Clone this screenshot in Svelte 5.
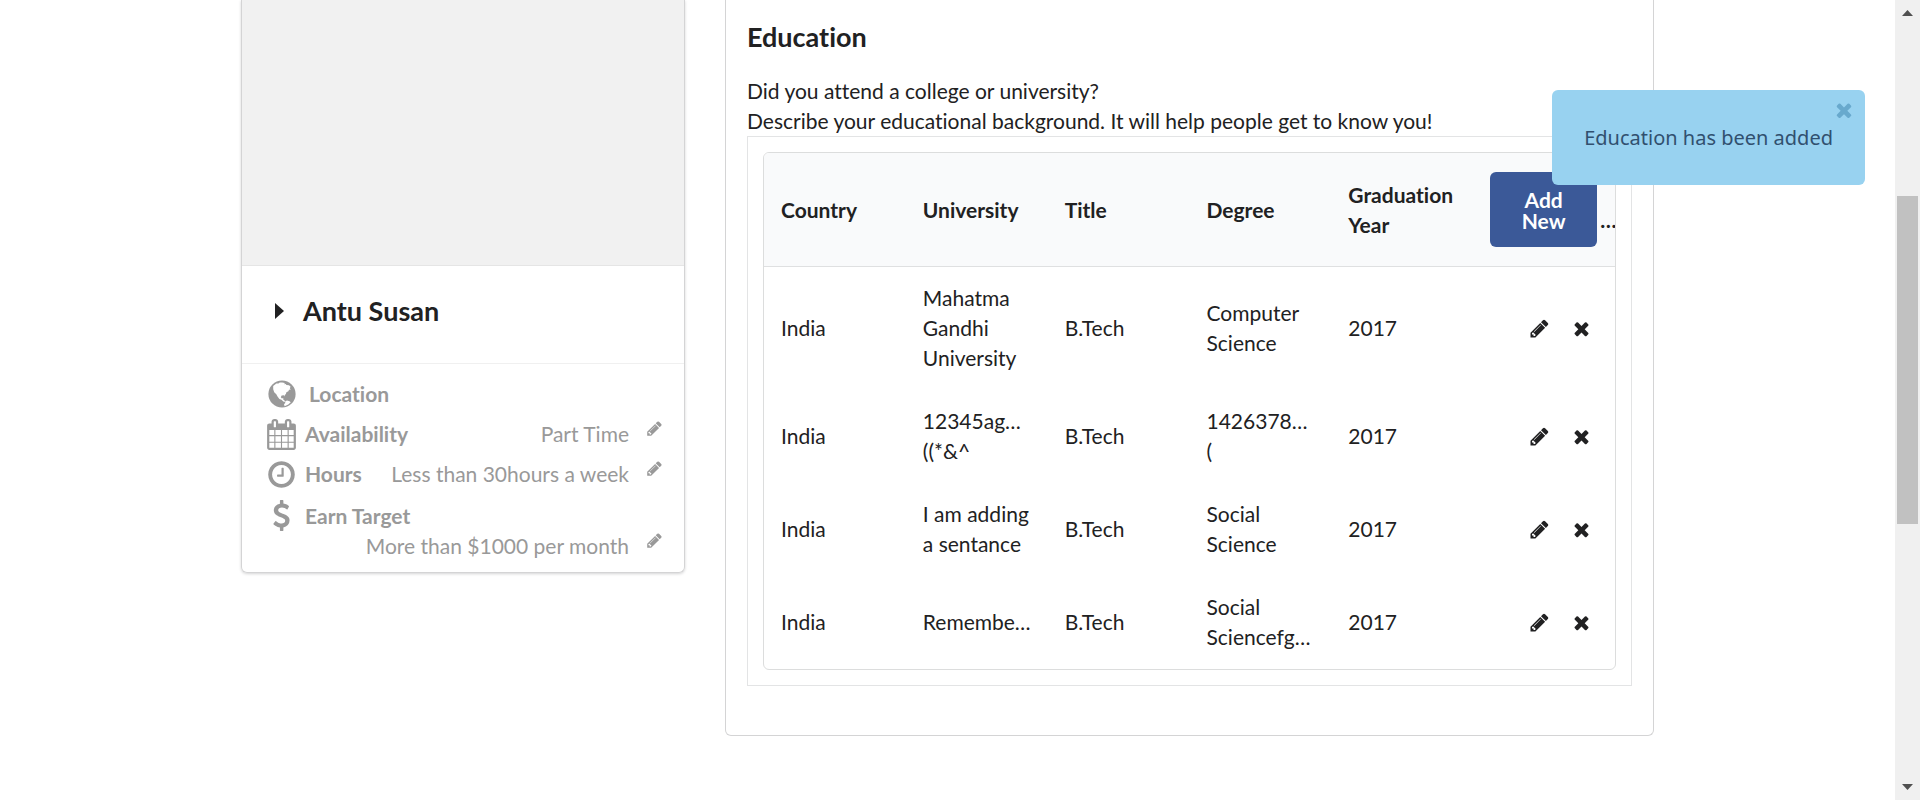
<script>
  const icons = {
    pencil: 'M491 1536l91-91-235-235-91 91v107h128v128h107zm523-928q0-22-22-22-10 0-17 7l-542 542q-7 7-7 17 0 22 22 22 10 0 17-7l542-542q7-7 7-17zm-54-192l416 416-832 832h-416v-416zm683 96q0 53-37 90l-166 166-416-416 166-165q36-38 90-38 53 0 91 38l235 234q37 39 37 91z',
    times: 'M1490 1322q0 40-28 68l-136 136q-28 28-68 28t-68-28l-294-294-294 294q-28 28-68 28t-68-28l-136-136q-28-28-28-68t28-68l294-294-294-294q-28-28-28-68t28-68l136-136q28-28 68-28t68 28l294 294 294-294q28-28 68-28t68 28l136 136q28 28 28 68t-28 68l-294 294 294 294q28 28 28 68z',
    clock: 'M1024 544v448q0 14-9 23t-23 9h-320q-14 0-23-9t-9-23v-64q0-14 9-23t23-9h224v-352q0-14 9-23t23-9h64q14 0 23 9t9 23zm416 352q0-148-73-273t-198-198-273-73-273 73-198 198-73 273 73 273 198 198 273 73 273-73 198-198 73-273zm224 0q0 209-103 385.5t-279.5 279.5-385.5 103-385.5-103-279.5-279.5-103-385.5 103-385.5 279.5-279.5 385.5-103 385.5 103 279.5 279.5 103 385.5z',
    calendar: 'M192 1664h288v-288h-288v288zm352 0h320v-288h-320v288zm-352-352h288v-320h-288v320zm352 0h320v-320h-320v320zm-352-384h288v-288h-288v288zm736 736h320v-288h-320v288zm-384-736h320v-288h-320v288zm768 736h288v-288h-288v288zm-384-352h320v-320h-320v320zm-352-864v-288q0-13-9.5-22.5t-22.5-9.5h-64q-13 0-22.5 9.5t-9.5 22.5v288q0 13 9.5 22.5t22.5 9.5h64q13 0 22.5-9.5t9.5-22.5zm736 864h288v-320h-288v320zm-384-384h320v-288h-320v288zm384 0h288v-288h-288v288zm32-480v-288q0-13-9.5-22.5t-22.5-9.5h-64q-13 0-22.5 9.5t-9.5 22.5v288q0 13 9.5 22.5t22.5 9.5h64q13 0 22.5-9.5t9.5-22.5zm384-64v1280q0 52-38 90t-90 38h-1408q-52 0-90-38t-38-90v-1280q0-52 38-90t90-38h128v-96q0-66 47-113t113-47h64q66 0 113 47t47 113v96h384v-96q0-66 47-113t113-47h64q66 0 113 47t47 113v96h128q52 0 90 38t38 90z',
    dollar: 'M1362 1185q0 153-99.5 263.5t-258.5 136.5v175q0 14-9 23t-23 9h-135q-13 0-22.5-9.5t-9.5-22.5v-175q-66-9-127.5-31t-101.5-44.5-74-48-46.5-37.5-17.5-18q-17-21-2-41l103-135q7-10 23-12 15-2 24 9l2 2q113 99 243 125 37 8 74 8 81 0 142.5-43t61.5-122q0-28-15-53t-33.5-42-58.5-37.5-66-32-80-32.5q-39-16-61.5-25t-61.5-26.5-62.5-31-56.5-35.5-53.5-42.5-43.5-49-35.5-58-21-66.5-8.5-78q0-138 98-242t255-134v-180q0-13 9.5-22.5t22.5-9.5h135q14 0 23 9t9 23v176q57 6 110.5 23t87 33.5 63.5 37.5 39 29 15 14q17 18 5 38l-81 146q-8 15-23 16-14 3-27-7-3-3-14.5-12t-39-26.5-58.5-32-74.5-26-85.5-11.5q-95 0-155 43t-60 111q0 26 8.5 48t29.5 41.5 39.5 33 56 31 60.5 27 70 27.5q53 20 81 31.5t76 35 75.5 42.5 62 50 53 63.5 31.5 76.5 13 94z'
  };

  const details = [
    { icon: 'calendar', label: 'Availability', value: 'Part Time' },
    { icon: 'clock', label: 'Hours', value: 'Less than 30hours a week' },
    { icon: 'dollar', label: 'Earn Target', value: 'More than $1000 per month', below: true }
  ];

  const columns = ['Country', 'University', 'Title', 'Degree', 'Graduation Year'];

  const rows = [
    ['India', ['Mahatma Gandhi University'], 'B.Tech', ['Computer Science'], '2017'],
    ['India', ['12345ag…', '((*&^'], 'B.Tech', ['1426378…', '('], '2017'],
    ['India', ['I am adding a sentance'], 'B.Tech', ['Social Science'], '2017'],
    ['India', ['Remembe…'], 'B.Tech', ['Social', 'Sciencefg…'], '2017']
  ];

  let toastOpen = $state(true);
</script>

{#snippet icon(name, size)}
  <svg width={size} height={size} viewBox="0 0 1792 1792" fill="currentColor" aria-hidden="true"><path d={icons[name]} /></svg>
{/snippet}

<div class="page">
  <main>
    <div class="columns">
      <aside class="card profile">
        <div class="photo"></div>
        <div class="name">
          <svg width="9" height="16" viewBox="0 0 9 16" aria-hidden="true"><path d="M0 0L9 8L0 16z" fill="currentColor" /></svg>
          <h2>Antu Susan</h2>
        </div>
        <div class="details">
          <div class="detail">
            <span class="glyph">
              <svg width="28" height="28" viewBox="0 0 28 28" aria-hidden="true">
                <circle cx="14" cy="14" r="13.6" fill="currentColor" />
                <path fill="#fff" d="M5.2 6L8.3 3.6L10.4 3.4L11.8 2.6L14.2 2.500L16.8 3.1L16.3 4.300L17.8 4L18.4 5L21 5.3L22.6 6.8L21.8 8.2L22.8 9.4L21 9.8L20.4 11.3L18.4 12.3L17.9 14.1L16.8 15L16.9 16.5L16 15.3L13.6 15.4L12.8 17.2L13.9 18.4L15.3 17.9L15.2 19.6L16.6 20.5L17 21.9L15.3 21.4L13.5 19.8L11.4 18.9L9.5 16.5L8.3 14.2L6.2 12.2L5.200 9.3z" />
                <path fill="#fff" d="M17.3 21.2L19 20.6L21.6 21.3L22.8 22.3L20.3 24.6L16.6 26.2L16 24.3L17.2 23z" />
              </svg>
            </span>
            <span class="label location">Location</span>
          </div>
          {#each details as d}
            <div class="detail" class:wrap={d.below}>
              <span class="glyph">{@render icon(d.icon, 31)}</span>
              <span class="label">{d.label}</span>
              <span class="value">{d.value}</span>
              <button class="bare edit" aria-label="Edit {d.label}">{@render icon('pencil', 17)}</button>
            </div>
          {/each}
        </div>
      </aside>

      <section class="card education">
        <h2>Education</h2>
        <p>Did you attend a college or university?<br />Describe your educational background. It will help people get to know you!</p>
        <div class="segment">
          <div class="frame">
            <table>
              <thead>
                <tr>
                  {#each columns as c}<th scope="col">{c}</th>{/each}
                  <th scope="col"><div class="adder"><button class="add">Add New</button><span class="more">…</span></div></th>
                </tr>
              </thead>
              <tbody>
                {#each rows as row}
                  <tr>
                    {#each row as cell}
                      <td>{#if Array.isArray(cell)}{#each cell as line}<div>{line}</div>{/each}{:else}{cell}{/if}</td>
                    {/each}
                    <td>
                      <div class="actions">
                        <button class="bare" aria-label="Edit">{@render icon('pencil', 21)}</button>
                        <button class="bare" aria-label="Delete">{@render icon('times', 21)}</button>
                      </div>
                    </td>
                  </tr>
                {/each}
              </tbody>
            </table>
          </div>
        </div>
      </section>
    </div>
  </main>

  <div class="scrollbar" aria-hidden="true">
    <svg width="11" height="6" viewBox="0 0 11 6"><path d="M0 6L5.500 0L11 6z" fill="#505050" /></svg>
    <div class="track"><div class="thumb"></div></div>
    <svg width="11" height="6" viewBox="0 0 11 6"><path d="M0 0L5.500 6L11 0z" fill="#505050" /></svg>
  </div>

  {#if toastOpen}
    <div class="toast" role="status">
      Education has been added
      <button class="bare close" aria-label="Close" onclick={() => (toastOpen = false)}>{@render icon('times', 22)}</button>
    </div>
  {/if}
</div>

<style>
  :global(body) { margin: 0; }
  .page {
    position: relative;
    display: flex;
    height: 100vh;
    overflow: hidden;
    background: #fff;
    color: #212122;
    font: 400 21px/30px Lato, "Open Sans", sans-serif;
    font-variant-ligatures: none;
  }
  main { flex: 1; min-width: 0; }
  .columns {
    display: grid;
    grid-template-columns: 444fr 929fr;
    gap: 40px;
    align-items: start;
    max-width: 1413px;
    margin: 0 auto;
  }
  .card {
    box-sizing: border-box;
    border: 1px solid #d4d4d5;
    border-top: 0;
    border-radius: 0 0 6px 6px;
  }
  h2 { margin: 0; font-size: 27px; line-height: 34px; font-weight: 700; }
  svg { display: block; }
  .bare { display: block; padding: 0; border: 0; background: none; color: inherit; cursor: pointer; }

  .profile { box-shadow: 0 1px 3px #d4d4d5; overflow: hidden; }
  .photo { height: 265px; background: #f1f1f1; border-bottom: 1px solid #e5e5e5; }
  .name {
    display: flex;
    align-items: center;
    gap: 19px;
    padding: 28px 33px 35px;
    border-bottom: 1px solid #f0f0f0;
  }
  .details { padding: 10px 21px 11px 24px; color: #999; }
  .detail { display: flex; align-items: center; min-height: 40px; }
  .glyph { display: flex; justify-content: center; flex: none; width: 31px; margin-right: 8px; }
  .label { font-weight: 700; }
  .location { padding-left: 4px; }
  .value { margin-left: auto; }
  .edit { flex: none; margin: 0 0 11px 17px; }
  .wrap { flex-wrap: wrap; padding-top: 6px; }
  .wrap .label { flex: 1 0 calc(100% - 39px); }

  .education { padding: 20px 21px 49px; }
  .education p { margin: 22px 0 0; }
  .segment { padding: 15px; border: 1px solid #e3e4e5; }
  .frame { border: 1px solid #dcdddd; border-radius: 6px; overflow: hidden; }
  table { width: 100%; table-layout: fixed; border-collapse: separate; border-spacing: 0; }
  th, td { text-align: left; vertical-align: middle; padding: 16px 17px 17px; }
  th { background: #f9fafb; border-bottom: 1px solid #dfe0e1; padding: 19px 17px 19px; font-weight: 700; }
  th:not(:last-child) { padding-right: 8px; }
  .adder { display: flex; align-items: flex-end; gap: 3px; }
  .more { margin-bottom: 12px; }
  .add {
    flex: none;
    width: 107px;
    padding: 17px 26px 16px;
    border: 0;
    border-radius: 6px;
    background: #3b5998;
    color: #fff;
    font: 700 21px/21px Lato, "Open Sans", sans-serif;
    cursor: pointer;
  }
  .actions { display: flex; justify-content: flex-end; gap: 21px; padding-right: 6px; }

  .scrollbar {
    box-sizing: border-box;
    display: flex;
    flex-direction: column;
    align-items: center;
    width: 25px;
    padding: 10px 2px;
    background: #f0f0f0;
  }
  .track { flex: 1; width: 100%; display: flex; flex-direction: column; }
  .track::before { content: ""; flex: 180; }
  .track::after { content: ""; flex: 260; }
  .thumb { flex: 328; background: #c1c1c1; }

  .toast {
    position: absolute;
    top: 90px;
    right: 55px;
    padding: 33px 32px 32px;
    border-radius: 6px;
    background: #98d2f0;
    color: #31506f;
    font-family: "Noto Sans", "Open Sans", sans-serif;
    font-size: 20px;
  }
  .close { position: absolute; top: 9px; right: 10px; color: #68a9cd; }
</style>
